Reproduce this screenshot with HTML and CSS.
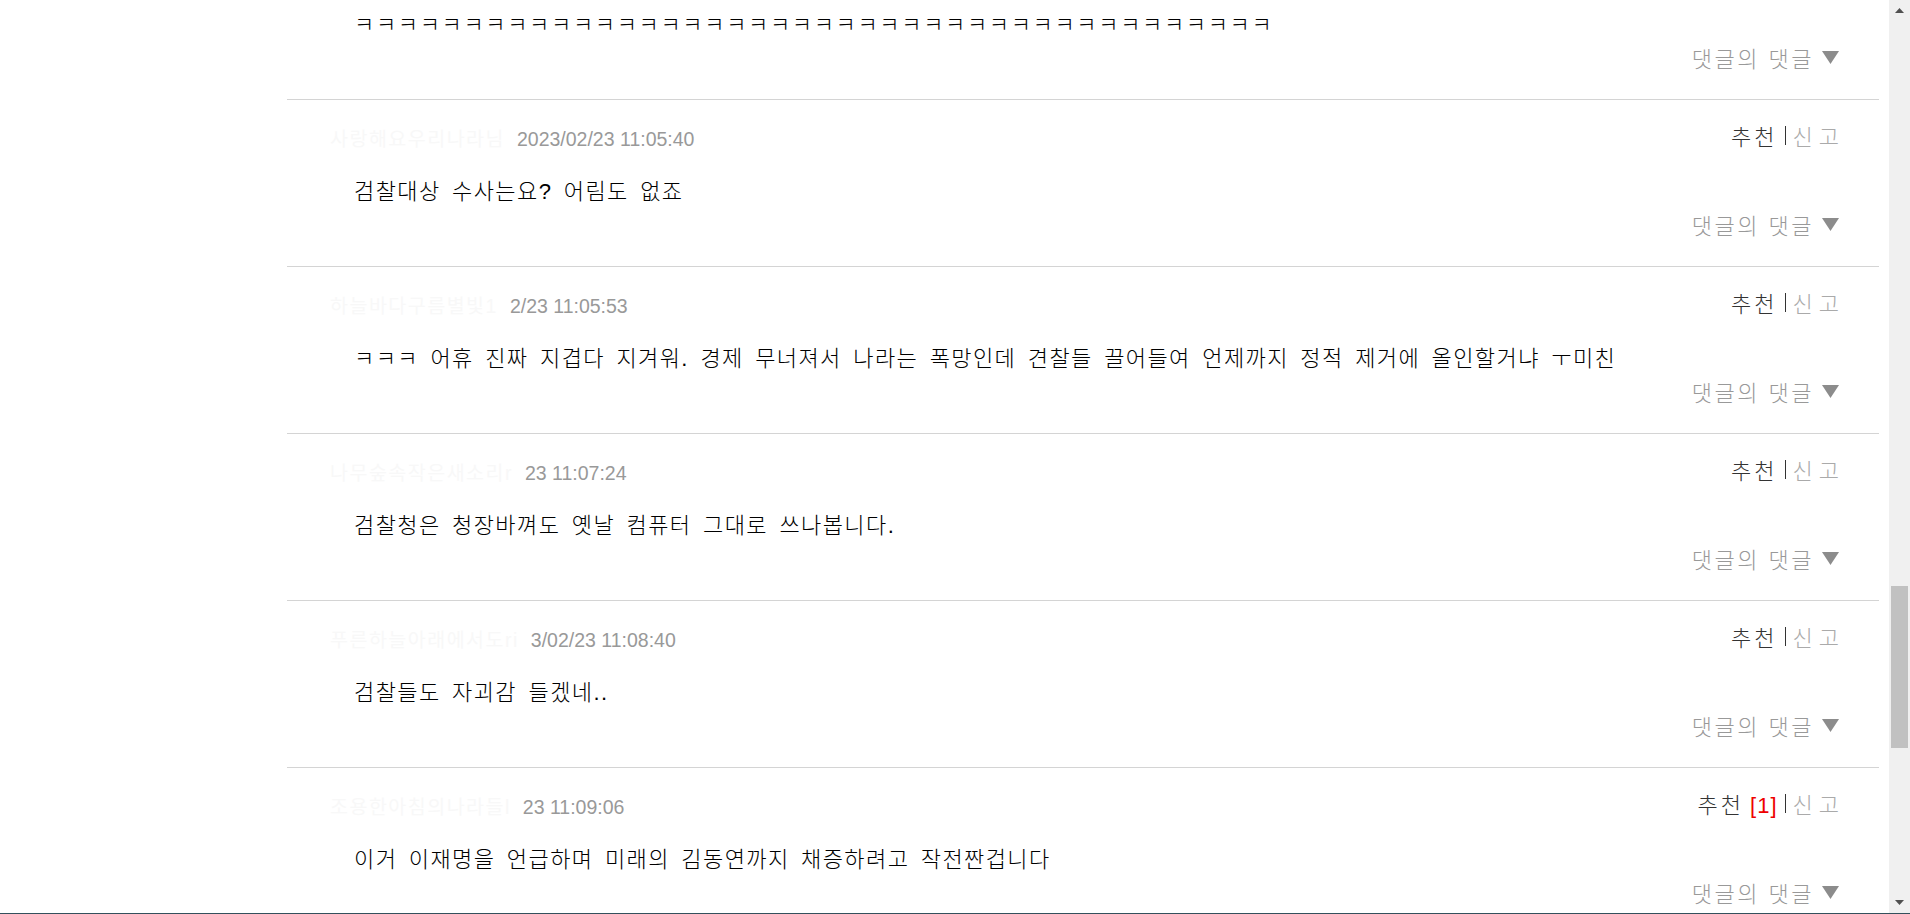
FILE: index.html
```html
<!DOCTYPE html>
<html>
<head>
	<meta charset="utf-8">
	<title>댓글</title>
	<link rel="stylesheet" href="styles.css">
</head>
<body>
	<div class="window">
		<div class="viewport">
			<div class="comments">

				<div class="comment cut">
					<div class="text">ㅋㅋㅋㅋㅋㅋㅋㅋㅋㅋㅋㅋㅋㅋㅋㅋㅋㅋㅋㅋㅋㅋㅋㅋㅋㅋㅋㅋㅋㅋㅋㅋㅋㅋㅋㅋㅋㅋㅋㅋㅋㅋ</div>
					<div class="replies">댓글의 댓글 <svg viewBox="0 0 17 13"><polygon points="0,0 17,0 8.5,13"/></svg></div>
				</div>

				<div class="comment">
					<div class="meta">
						<div class="who"><span class="name">사랑해요우리나라님</span><span class="date">2023/02/23 11:05:40</span></div>
						<div class="actions"><span class="vote">추천</span><span class="sep"></span><span class="report">신고</span></div>
					</div>
					<div class="text">검찰대상 수사는요? 어림도 없죠</div>
					<div class="replies">댓글의 댓글 <svg viewBox="0 0 17 13"><polygon points="0,0 17,0 8.5,13"/></svg></div>
				</div>

				<div class="comment">
					<div class="meta">
						<div class="who"><span class="name">하늘바다구름별빛1</span><span class="date">2/23 11:05:53</span></div>
						<div class="actions"><span class="vote">추천</span><span class="sep"></span><span class="report">신고</span></div>
					</div>
					<div class="text">ㅋㅋㅋ 어휴 진짜 지겹다 지겨워. 경제 무너져서 나라는 폭망인데 견찰들 끌어들여 언제까지 정적 제거에 올인할거냐 ㅜ미친</div>
					<div class="replies">댓글의 댓글 <svg viewBox="0 0 17 13"><polygon points="0,0 17,0 8.5,13"/></svg></div>
				</div>

				<div class="comment">
					<div class="meta">
						<div class="who"><span class="name">나무숲속작은새소리r</span><span class="date">23 11:07:24</span></div>
						<div class="actions"><span class="vote">추천</span><span class="sep"></span><span class="report">신고</span></div>
					</div>
					<div class="text">검찰청은 청장바껴도 옛날 컴퓨터 그대로 쓰나봅니다.</div>
					<div class="replies">댓글의 댓글 <svg viewBox="0 0 17 13"><polygon points="0,0 17,0 8.5,13"/></svg></div>
				</div>

				<div class="comment">
					<div class="meta">
						<div class="who"><span class="name">푸른하늘아래에서도ri</span><span class="date">3/02/23 11:08:40</span></div>
						<div class="actions"><span class="vote">추천</span><span class="sep"></span><span class="report">신고</span></div>
					</div>
					<div class="text">검찰들도 자괴감 들겠네..</div>
					<div class="replies">댓글의 댓글 <svg viewBox="0 0 17 13"><polygon points="0,0 17,0 8.5,13"/></svg></div>
				</div>

				<div class="comment">
					<div class="meta">
						<div class="who"><span class="name">조용한아침의나라들l</span><span class="date">23 11:09:06</span></div>
						<div class="actions"><span class="vote">추천<span class="count">[1]</span></span><span class="sep"></span><span class="report">신고</span></div>
					</div>
					<div class="text">이거 이재명을 언급하며 미래의 김동연까지 채증하려고 작전짠겁니다</div>
					<div class="replies">댓글의 댓글 <svg viewBox="0 0 17 13"><polygon points="0,0 17,0 8.5,13"/></svg></div>
				</div>

			</div>
		</div>
		<div class="scrollbar">
			<div class="arrow"><svg viewBox="0 0 9 5"><polygon points="0,5 9,5 4.5,0"/></svg></div>
			<div class="track"><div class="thumb"></div></div>
			<div class="arrow"><svg viewBox="0 0 9 5"><polygon points="0,0 9,0 4.5,5"/></svg></div>
		</div>
	</div>
	<div class="taskbar"></div>
</body>
</html>
```

FILE: styles.css
```css
html, body {
	margin: 0;
	height: 914px;
	overflow: hidden;
	background: #fff;
}

.window {
	display: flex;
	height: 913px;
}

.viewport {
	flex: 1;
	overflow: hidden;
	padding: 0 10px 0 287px;
}

/* list is scrolled down, first comment only shows its tail */
.comments {
	padding-top: 10px;
}

.comment {
	border-top: 1px solid #d4d4d4;
	padding-bottom: 27px;
}

.cut {
	border-top: 0;
}

.meta {
	display: flex;
	justify-content: space-between;
	align-items: center;
	height: 32px;
	margin-top: 21px;
	padding: 0 34px 0 43px;
}

.who {
	font-family: "Liberation Sans", "Noto Sans CJK KR", sans-serif;
	font-size: 19.5px;
	white-space: nowrap;
}

.name {
	letter-spacing: 1.5px;
	color: #f8f8f8;
}

.date {
	margin-left: 12px;
	color: #999;
}

.actions {
	display: flex;
	align-items: center;
	gap: 7px;
	margin-bottom: 4px;
	font-family: "Liberation Sans", "Noto Sans CJK KR", sans-serif;
	font-size: 22px;
	font-weight: 300;
	letter-spacing: 3px;
}

.vote {
	color: #333;
}

.count {
	margin-left: 6px;
	letter-spacing: 1px;
	color: #e00;
}

.sep {
	width: 1px;
	height: 19px;
	background: #333;
}

.report {
	letter-spacing: 6px;
	color: #aaa;
}

.text {
	margin-top: 24px;
	padding-left: 67px;
	font-family: "Liberation Sans", "Noto Sans CJK KR", sans-serif;
	font-size: 22px;
	font-weight: 300;
	line-height: 30px;
	letter-spacing: 1.4px;
	word-spacing: 4px;
	color: #000;
	white-space: nowrap;
}

.cut .text {
	margin-top: 0;
	letter-spacing: 1.65px;
}

.replies {
	display: flex;
	justify-content: flex-end;
	align-items: center;
	gap: 8px;
	height: 30px;
	margin-top: 2px;
	padding-right: 40px;
	font-family: "Liberation Sans", "Noto Sans CJK KR", sans-serif;
	font-size: 22px;
	font-weight: 300;
	letter-spacing: 2.5px;
	color: #999;
}

.replies svg {
	width: 17px;
	height: 13px;
	fill: #8c8c8c;
}

.scrollbar {
	display: flex;
	flex-direction: column;
	width: 21px;
	background: #f0f0f0;
}

.arrow {
	display: flex;
	align-items: center;
	justify-content: center;
	height: 21px;
}

.arrow svg {
	width: 9px;
	height: 5px;
	fill: #505050;
}

.track {
	flex: 1;
}

.thumb {
	height: 162px;
	margin: 565px 2px 0;
	background: #c1c1c1;
}

.taskbar {
	height: 1px;
	background: #34505c;
}
```
